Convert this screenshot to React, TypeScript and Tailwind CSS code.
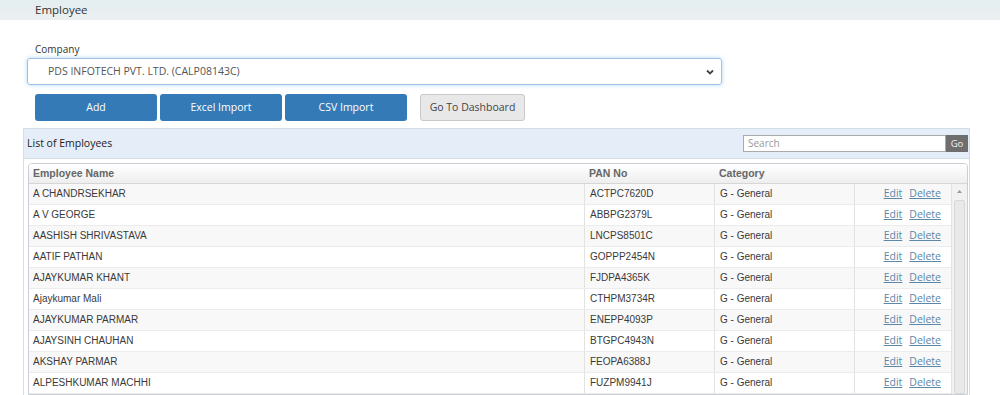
const employees = [
  { name: 'A CHANDRSEKHAR', pan: 'ACTPC7620D' },
  { name: 'A V GEORGE', pan: 'ABBPG2379L' },
  { name: 'AASHISH SHRIVASTAVA', pan: 'LNCPS8501C' },
  { name: 'AATIF PATHAN', pan: 'GOPPP2454N' },
  { name: 'AJAYKUMAR KHANT', pan: 'FJDPA4365K' },
  { name: 'Ajaykumar Mali', pan: 'CTHPM3734R' },
  { name: 'AJAYKUMAR PARMAR', pan: 'ENEPP4093P' },
  { name: 'AJAYSINH CHAUHAN', pan: 'BTGPC4943N' },
  { name: 'AKSHAY PARMAR', pan: 'FEOPA6388J' },
  { name: 'ALPESHKUMAR MACHHI', pan: 'FUZPM9941J' },
]

const ui = { fontFamily: '"Open Sans", "Noto Sans", sans-serif' }
const grid = { fontFamily: '"Liberation Sans", Arial, sans-serif' }

export default function App() {
  return (
    <div className="w-[1000px] h-[395px] overflow-hidden bg-white" style={ui}>
      {/* Title bar */}
      <div className="h-[20px] bg-gradient-to-b from-[#e4eef1] to-[#eceff0] pl-[35px] text-[11.5px] leading-[20px] text-[#333]">
        Employee
      </div>

      {/* Company + actions */}
      <div className="pl-[27px] pt-[21px]">
        <div className="pl-[8px] text-[10px] leading-[16px] text-[#333]">Company</div>
        <div className="mt-[1px] w-[695px] h-[27px] border border-[#9ec2e4] rounded-[3px] shadow-[0_0_4px_rgba(102,175,233,0.5)] flex items-center justify-between pl-[20px] pr-[6px]">
          <span className="text-[10.5px] text-[#555]">PDS INFOTECH PVT. LTD. (CALP08143C)</span>
          <svg width="10" height="10" viewBox="0 0 10 10" fill="none" stroke="#444" strokeWidth="1.8">
            <path d="M2 3.5 L5 6.5 L8 3.5" />
          </svg>
        </div>
        <div className="mt-[9px] ml-[8px] flex items-center text-[10.5px]">
          <button className="w-[122px] h-[27px] bg-[#337ab7] text-white rounded-[3px]">Add</button>
          <button className="ml-[3px] w-[122px] h-[27px] bg-[#337ab7] text-white rounded-[3px]">Excel Import</button>
          <button className="ml-[3px] w-[122px] h-[27px] bg-[#337ab7] text-white rounded-[3px]">CSV Import</button>
          <button className="ml-[13px] w-[105px] h-[27px] bg-[#e8e8e8] border border-[#c8c8c8] text-[#444] rounded-[3px]">Go To Dashboard</button>
        </div>
      </div>

      {/* Panel */}
      <div className="mt-[7px] ml-[23px] w-[947px] h-[300px] border border-[#d3dde6] border-b-0">
        <div className="h-[30px] bg-[#e5eef8] border-b border-[#d3dde6] flex items-center justify-between pl-[3px] pr-[1px]">
          <span className="text-[10.5px] text-[#222]">List of Employees</span>
          <div className="flex items-center">
            <div className="w-[203px] h-[17px] border border-[#aaa] bg-white pl-[4px] text-[10px] leading-[15px] text-[#999]">Search</div>
            <div className="w-[22px] h-[17px] bg-[#6e6e6e] text-[#f2f2f2] text-[9.5px] leading-[17px] text-center">Go</div>
          </div>
        </div>

        <div className="mt-[4px] ml-[4px] w-[940px] border border-[#c9cfd4] rounded-t-[4px] overflow-hidden" style={grid}>
          <div className="h-[20px] flex items-center bg-gradient-to-b from-[#ffffff] to-[#eeeeee] border-b border-[#d6d6d6] text-[10.5px] font-bold text-[#666]">
            <div className="w-[555px] pl-[4px]">Employee Name</div>
            <div className="w-[130px] pl-[5px]">PAN No</div>
            <div className="w-[140px] pl-[5px]">Category</div>
          </div>
          <div className="flex">
            <div className="w-[923px]">
              {employees.map((e, i) => (
                <div
                  key={e.pan}
                  className={`h-[21px] flex text-[10px] text-[#3a3a3a] border-b border-[#ececec] ${i % 2 === 0 ? 'bg-[#f8f8f8]' : 'bg-white'}`}
                >
                  <div className="w-[555px] pl-[4px] leading-[20px]">{e.name}</div>
                  <div className="w-[130px] pl-[5px] leading-[20px] border-l border-[#e2e2e2]">{e.pan}</div>
                  <div className="w-[140px] pl-[5px] leading-[20px] border-l border-[#e2e2e2]">G - General</div>
                  <div className="flex-1 border-l border-[#e2e2e2] flex justify-end items-center pr-[10px] gap-[7px] text-[10.5px] text-[#5b87a8] underline" style={ui}>
                    <span>Edit</span>
                    <span>Delete</span>
                  </div>
                </div>
              ))}
            </div>
            <div className="w-[16px] border-l border-[#e3e3e3] bg-[#f2f2f2] flex flex-col items-center">
              <svg width="15" height="14" viewBox="0 0 15 14" className="mt-[1px]">
                <path d="M5 8 L7.5 5 L10 8 Z" fill="#999" />
              </svg>
              <div className="mt-[1px] w-[11px] flex-1 bg-[#e9e9e9] border border-[#d8d8d8] rounded-[2px]" />
            </div>
          </div>
        </div>
      </div>
    </div>
  )
}
